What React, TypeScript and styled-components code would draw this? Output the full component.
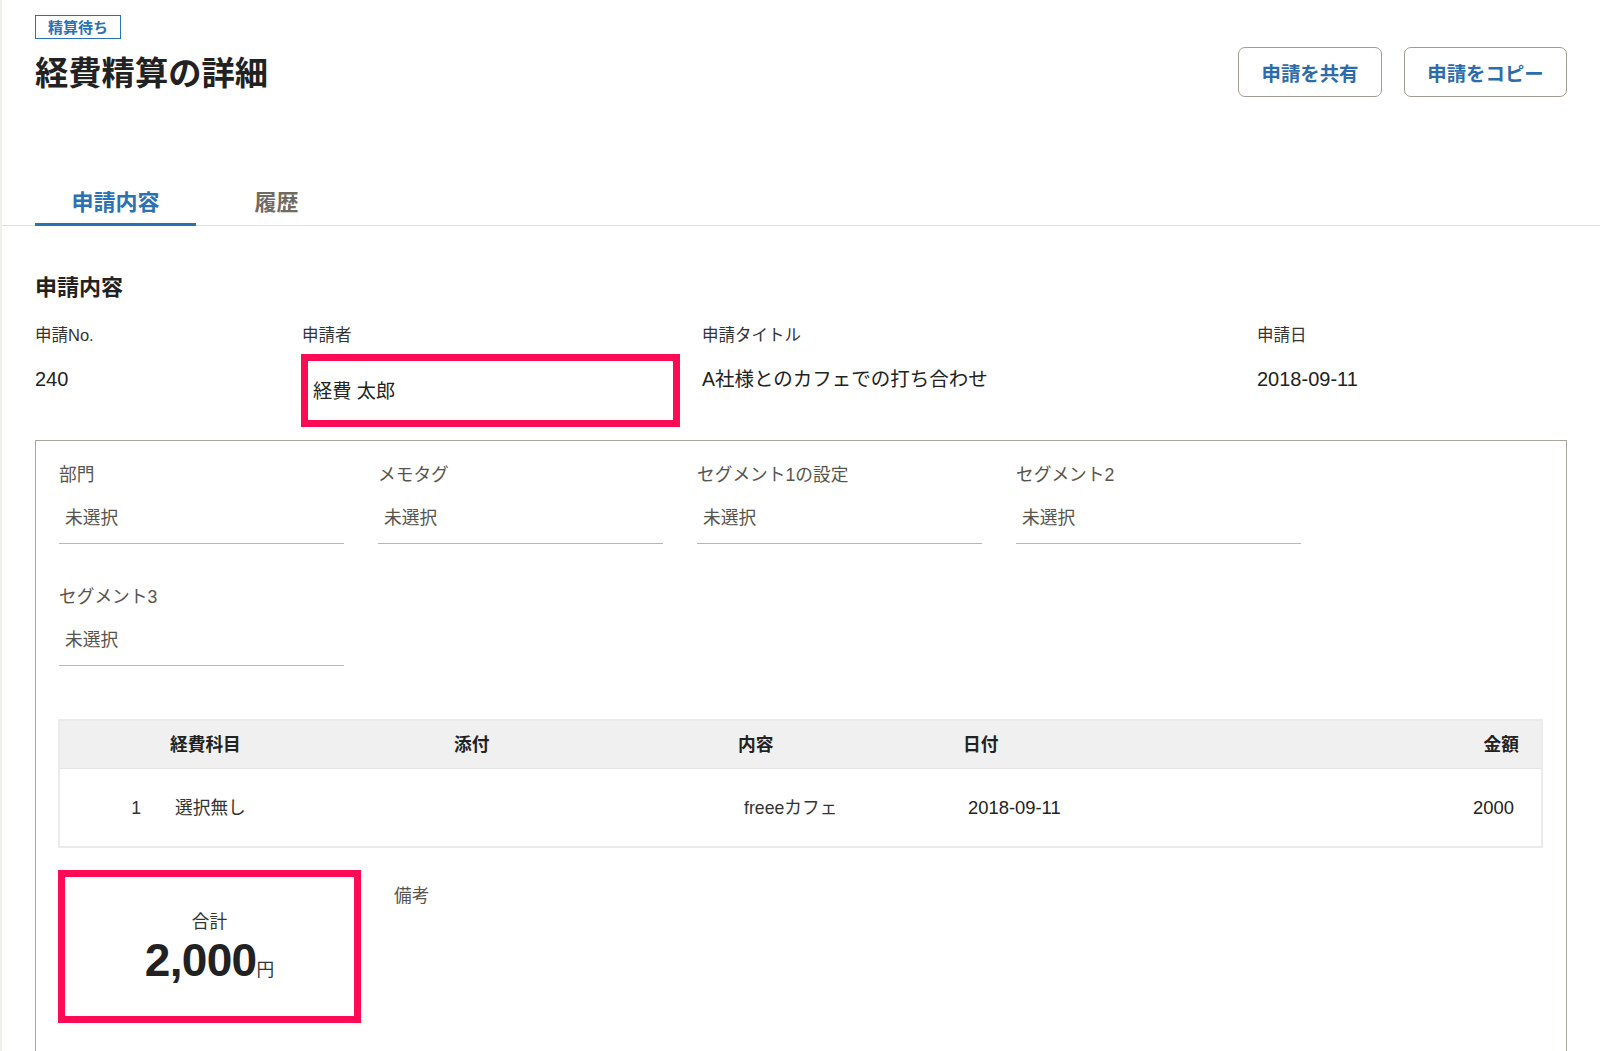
import React from 'react';
import styled, { createGlobalStyle } from 'styled-components';

const GlobalStyle = createGlobalStyle`
  html, body {
    margin: 0;
    height: 1051px;
    overflow: hidden;
    background: #fff;
    color: #222;
    font-family: "Liberation Sans", "Noto Sans CJK JP", sans-serif;
  }
`;

const Page = styled.div`
  box-sizing: border-box;
  height: 1051px;
  overflow: hidden;
  border-left: 2px solid #f0eeea;
`;

const Header = styled.header`
  display: flex;
  justify-content: space-between;
  height: 163px;
  padding: 15px 33px 0;
`;

const Badge = styled.span`
  display: block;
  box-sizing: border-box;
  width: 86px;
  height: 24px;
  border: 1px solid #2b72b5;
  color: #2b72b5;
  font-size: 15px;
  font-weight: 700;
  line-height: 23px;
  text-align: center;
`;

const Title = styled.h1`
  margin: 13px 0 0;
  font-size: 33.3px;
  font-weight: 700;
  line-height: 44px;
  color: #222;
`;

const Actions = styled.div`
  display: flex;
  gap: 22px;
  padding-top: 32px;
`;

const ActionButton = styled.button<{ $width: number }>`
  box-sizing: border-box;
  width: ${({ $width }) => $width}px;
  height: 50px;
  border: 1.5px solid #a09c94;
  border-radius: 7px;
  background: #fff;
  color: #2b6cab;
  font-family: inherit;
  font-size: 19.4px;
  font-weight: 700;
`;

const Tabs = styled.nav`
  display: flex;
  height: 47px;
  padding: 0 33px;
  border-bottom: 1px solid #e3e0d9;
`;

const Tab = styled.div<{ $active?: boolean }>`
  box-sizing: border-box;
  width: 161px;
  height: 48px;
  border-bottom: ${({ $active }) => ($active ? '3px solid #2b72b5' : 'none')};
  color: ${({ $active }) => ($active ? '#2b72b5' : '#6f6b62')};
  font-size: 22px;
  font-weight: 700;
  line-height: 50px;
  text-align: center;
`;

const Content = styled.main`
  padding: 0 33px;
`;

const SectionTitle = styled.h2`
  margin: 47px 0 0;
  font-size: 22px;
  font-weight: 700;
  line-height: 30px;
  color: #222;
`;

const Summary = styled.div`
  display: grid;
  grid-template-columns: 267px 400px 555px 1fr;
  margin-top: 18px;
  height: 119px;
`;

const SummaryLabel = styled.div`
  height: 28px;
  font-size: 16.5px;
  line-height: 28px;
  color: #333;
`;

const SummaryValue = styled.div<{ $size?: number }>`
  margin-top: 17px;
  font-size: ${({ $size }) => $size ?? 20}px;
  line-height: 26px;
  color: #222;
`;

const HighlightValue = styled.div`
  box-sizing: border-box;
  width: 379px;
  height: 73px;
  margin: 5px 0 0 -1px;
  padding: 18px 0 0 5px;
  border: 7px solid #ff0a54;
  font-size: 19.2px;
  line-height: 26px;
  color: #222;
`;

const DetailBox = styled.section`
  box-sizing: border-box;
  width: 1532px;
  height: 640px;
  padding: 22px 23px 0;
  border: 1px solid #a8a69c;
  border-bottom: none;
`;

const SelectGrid = styled.div`
  display: grid;
  grid-template-columns: repeat(4, 285px);
  column-gap: 34px;
  row-gap: 28px;
`;

const SelectField = styled.div`
  height: 94px;
`;

const SelectLabel = styled.div`
  font-size: 17.7px;
  line-height: 24px;
  color: #57544d;
`;

const SelectValue = styled.div`
  box-sizing: border-box;
  height: 57px;
  padding: 18px 0 0 6px;
  border-bottom: 1px solid #b9b7b0;
  font-size: 17.7px;
  line-height: 26px;
  color: #57544d;
`;

const Table = styled.div`
  box-sizing: border-box;
  width: 1485px;
  margin: 40px 0 0 -1px;
  border: 2px solid #ebebeb;
`;

const Columns = styled.div`
  display: grid;
  grid-template-columns: 110px 284px 284px 225px 1fr 200px;
`;

const HeadRow = styled(Columns)`
  height: 47px;
  background: #f0f0f0;
  border-bottom: 1px solid #e4e4e4;
  font-size: 17.7px;
  font-weight: 700;
  line-height: 48px;
  color: #222;
`;

const BodyRow = styled(Columns)`
  height: 77px;
  font-size: 17.7px;
  line-height: 78px;
  color: #333;
`;

const Cell = styled.div<{ $align?: 'right' | 'left'; $inset?: number }>`
  text-align: ${({ $align }) => $align ?? 'left'};
  ${({ $align, $inset }) => ($align === 'right' ? `padding-right: ${$inset ?? 0}px;` : `padding-left: ${$inset ?? 0}px;`)}
`;

const NumberCell = styled(Cell)`
  font-size: 18.4px;
  color: #222;
`;

const Footer = styled.div`
  display: flex;
  gap: 33px;
  margin: 22px 0 0 -1px;
`;

const TotalBox = styled.div`
  box-sizing: border-box;
  display: flex;
  flex-direction: column;
  align-items: center;
  width: 303px;
  height: 153px;
  padding-top: 33px;
  border: 7px solid #ff0a54;
`;

const TotalLabel = styled.div`
  font-size: 17.7px;
  line-height: 25px;
  color: #333;
`;

const TotalAmount = styled.div`
  font-size: 46px;
  font-weight: 700;
  line-height: 50px;
  letter-spacing: -0.7px;
  color: #222;
`;

const TotalUnit = styled.span`
  font-size: 17.7px;
  font-weight: 400;
  letter-spacing: 0;
  color: #333;
`;

const Note = styled.div`
  padding-top: 13px;
  font-size: 17.7px;
  line-height: 26px;
  color: #57544d;
`;

const selects = ['部門', 'メモタグ', 'セグメント1の設定', 'セグメント2', 'セグメント3'];

export default function App (): React.ReactElement {
  return (
    <Page>
      <GlobalStyle />
      <Header>
        <div>
          <Badge>精算待ち</Badge>
          <Title>経費精算の詳細</Title>
        </div>
        <Actions>
          <ActionButton $width={144}>申請を共有</ActionButton>
          <ActionButton $width={163}>申請をコピー</ActionButton>
        </Actions>
      </Header>
      <Tabs>
        <Tab $active>申請内容</Tab>
        <Tab>履歴</Tab>
      </Tabs>
      <Content>
        <SectionTitle>申請内容</SectionTitle>
        <Summary>
          <div>
            <SummaryLabel>申請No.</SummaryLabel>
            <SummaryValue>240</SummaryValue>
          </div>
          <div>
            <SummaryLabel>申請者</SummaryLabel>
            <HighlightValue>経費 太郎</HighlightValue>
          </div>
          <div>
            <SummaryLabel>申請タイトル</SummaryLabel>
            <SummaryValue $size={19.5}>A社様とのカフェでの打ち合わせ</SummaryValue>
          </div>
          <div>
            <SummaryLabel>申請日</SummaryLabel>
            <SummaryValue>2018-09-11</SummaryValue>
          </div>
        </Summary>
        <DetailBox>
          <SelectGrid>
            {selects.map((label) => (
              <SelectField key={label}>
                <SelectLabel>{label}</SelectLabel>
                <SelectValue>未選択</SelectValue>
              </SelectField>
            ))}
          </SelectGrid>
          <Table>
            <HeadRow>
              <Cell />
              <Cell>経費科目</Cell>
              <Cell>添付</Cell>
              <Cell>内容</Cell>
              <Cell>日付</Cell>
              <Cell $align='right' $inset={22}>金額</Cell>
            </HeadRow>
            <BodyRow>
              <Cell $align='right' $inset={29}>1</Cell>
              <Cell $inset={5}>選択無し</Cell>
              <Cell />
              <Cell $inset={6}>freeeカフェ</Cell>
              <NumberCell $inset={5}>2018-09-11</NumberCell>
              <NumberCell $align='right' $inset={27}>2000</NumberCell>
            </BodyRow>
          </Table>
          <Footer>
            <TotalBox>
              <TotalLabel>合計</TotalLabel>
              <TotalAmount>2,000<TotalUnit>円</TotalUnit></TotalAmount>
            </TotalBox>
            <Note>備考</Note>
          </Footer>
        </DetailBox>
      </Content>
    </Page>
  );
}
